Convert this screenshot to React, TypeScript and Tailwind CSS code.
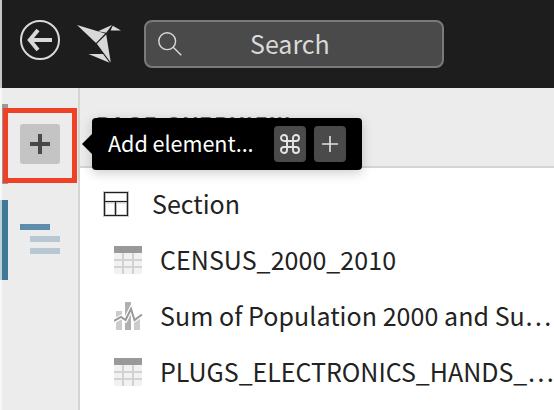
import type { ReactNode } from "react";

function BackIcon() {
  return (
    <svg width="40" height="40" viewBox="0 0 40 40" fill="none" stroke="#d9d9d9">
      <circle cx="20" cy="20" r="19" strokeWidth="2" />
      <path d="M32 20H10M18 10L9.8 20L18 30" strokeWidth="4" />
    </svg>
  );
}

function BirdLogo() {
  return (
    <svg width="46" height="40" viewBox="0 0 46 40" fill="#d9d9d9">
      <path d="M0 0L28.2 8.4L19 18Z" />
      <path d="M21 6.2L35 0L29.2 7.8Z" />
      <path d="M35.8 0.8L44 5.4H33.6Z" />
      <path d="M29.2 9.6L33.8 37.5L19.8 18.8Z" />
      <path d="M11.5 29H26L32.6 37.8Z" />
    </svg>
  );
}

function SearchIcon() {
  return (
    <svg width="24" height="24" viewBox="0 0 24 24" fill="none" stroke="#d9d9d9" strokeWidth="1.4">
      <circle cx="9.2" cy="9.2" r="8.4" />
      <path d="M15.2 15.2L23.3 23.2" />
    </svg>
  );
}

function SectionIcon() {
  return (
    <svg width="26" height="26" viewBox="0 0 26 26" fill="none">
      <path d="M1.5 1.5H24.5V24.5H1.5ZM1.5 11H24.5M12.5 11V24.5" stroke="#cfcfcf" strokeWidth="3" />
      <path d="M1.5 1.5H24.5V24.5H1.5ZM1.5 10.5H24.5M12.5 10.5V24.5" stroke="#1f1f1f" strokeWidth="1.2" />
    </svg>
  );
}

function TableIcon() {
  return (
    <svg width="28" height="28" viewBox="0 0 28 28">
      <rect width="28" height="28" fill="#f2f2f2" />
      <path d="M9 7V28M19 7V28M0 14H28M0 21H28" stroke="#d2d2d2" strokeWidth="2" />
      <rect width="28" height="7" fill="#999999" />
    </svg>
  );
}

function ChartIcon() {
  return (
    <svg width="29" height="28" viewBox="0 0 29 28">
      <path d="M2 9H8V28H2ZM20 16H26V28H20Z" fill="#cccccc" />
      <path d="M11 0H17V28H11Z" fill="#b0b0b0" />
      <path d="M0 19L7 15L11.5 18L17 7L20.5 18L28 12.5" fill="none" stroke="#fff" strokeWidth="4.4" />
      <path d="M0 19L7 15L11.5 18L17 7L20.5 18L28 12.5" fill="none" stroke="#999" strokeWidth="2" />
    </svg>
  );
}

function CommandIcon() {
  return (
    <svg width="20" height="20" viewBox="0 0 20 20" fill="none" stroke="#e4e4e4" strokeWidth="1.9">
      <path d="M7 7H13V13H7ZM7 7H4A3 3 0 1 1 7 4ZM13 7V4A3 3 0 1 1 16 7ZM13 13H16A3 3 0 1 1 13 16ZM7 13V16A3 3 0 1 1 4 13Z" />
    </svg>
  );
}

function Item({ icon, label, spacing }: { icon: ReactNode; label: string; spacing: string }) {
  return (
    <div className="flex h-14 items-center pl-[34px]">
      <div className="mr-[17px] w-[29px] shrink-0">{icon}</div>
      <span className={`whitespace-nowrap pb-0.5 ${spacing}`}>{label}</span>
    </div>
  );
}

export default function App() {
  return (
    <div className="relative flex h-[410px] w-[554px] overflow-hidden bg-white font-['Noto_Sans_CJK_SC',sans-serif] text-[25px] leading-8 text-[#222]">
      <div className="flex w-0.5 shrink-0 flex-col bg-[#f8f8f8]">
        <div className="h-[88px] bg-[#c6c6c6]" />
        <div className="mt-[112px] h-20 bg-[#bed1da]" />
      </div>
      <div className="flex min-w-0 flex-1 flex-col">
        <header className="flex h-[88px] shrink-0 items-center bg-[#1d1d1d] pl-[18px]">
          <div className="mb-2"><BackIcon /></div>
          <div className="ml-[17px] mt-0.5"><BirdLogo /></div>
          <div className="ml-[21px] flex h-12 w-[300px] items-center rounded-lg border-2 border-[#7a7a7a] bg-[#4a4a4a] pl-3">
            <SearchIcon />
            <span className="ml-[68px] pb-0.5 text-[#d9d9d9]">Search</span>
          </div>
        </header>
        <div className="flex flex-1">
          <nav className="w-[78px] shrink-0 border-r-2 border-[#d4d4d4] bg-[#ececec] pt-4">
            <div className="relative flex h-20 items-center border-l-[6px] border-[#999] pl-3">
              <div className="flex size-10 items-center justify-center rounded-[3px] bg-[#c4c4c4]">
                <svg width="20" height="20" stroke="#484848" strokeWidth="4"><path d="M0 10H20M10 0V20" /></svg>
              </div>
              <div className="absolute -left-[5px] top-1 h-[75px] w-[74px] border-[5px] border-[#ef4126]" />
            </div>
            <div className="mt-4 flex h-20 flex-col gap-1.5 border-l-[6px] border-[#3f7896] pl-3 pt-6">
              <div className="h-1.5 w-[30px] bg-[#5c8daa]" />
              <div className="ml-2.5 h-1.5 w-[30px] bg-[#b8c8d3]" />
              <div className="ml-2.5 h-1.5 w-[30px] bg-[#b8c8d3]" />
            </div>
          </nav>
          <main className="min-w-0 flex-1">
            <div className="h-20 whitespace-nowrap border-b-2 border-[#d4d4d4] bg-[#ececec] pl-4 pt-5 text-[21px] font-bold tracking-[2.2px] text-[#666]">
              PAGE OVERVIEW
            </div>
            <div className="mt-2">
              <div className="flex h-14 items-center pl-[23px]">
                <SectionIcon />
                <span className="ml-[23px] pb-0.5">Section</span>
              </div>
              <Item icon={<TableIcon />} label="CENSUS_2000_2010" spacing="tracking-[0.05px]" />
              <Item icon={<ChartIcon />} label="Sum of Population 2000 and Su…" spacing="tracking-[0.05px]" />
              <Item icon={<TableIcon />} label="PLUGS_ELECTRONICS_HANDS_…" spacing="tracking-[-0.02px]" />
            </div>
          </main>
        </div>
      </div>
      <div className="absolute left-[92px] top-[118px] flex h-[52px] w-[270px] items-center rounded-[4px] bg-black pl-4 pr-4 text-white shadow-[0_3px_12px_rgba(0,0,0,0.2)]">
        <svg className="absolute -left-[10px] top-4" width="10" height="20"><path d="M10 0L0 10L10 20Z" /></svg>
        <span className="flex-1 whitespace-nowrap pb-0.5 text-[21.6px] tracking-[-0.05px]">Add element...</span>
        <div className="flex gap-2">
          <kbd className="flex h-9 w-8 items-center justify-center rounded-[4px] bg-[#4a4a4a]"><CommandIcon /></kbd>
          <kbd className="flex h-9 w-8 items-center justify-center rounded-[4px] bg-[#4a4a4a]">
            <svg width="16" height="16" stroke="#e4e4e4" strokeWidth="1.6"><path d="M0 8H16M8 0V16" /></svg>
          </kbd>
        </div>
      </div>
    </div>
  );
}
